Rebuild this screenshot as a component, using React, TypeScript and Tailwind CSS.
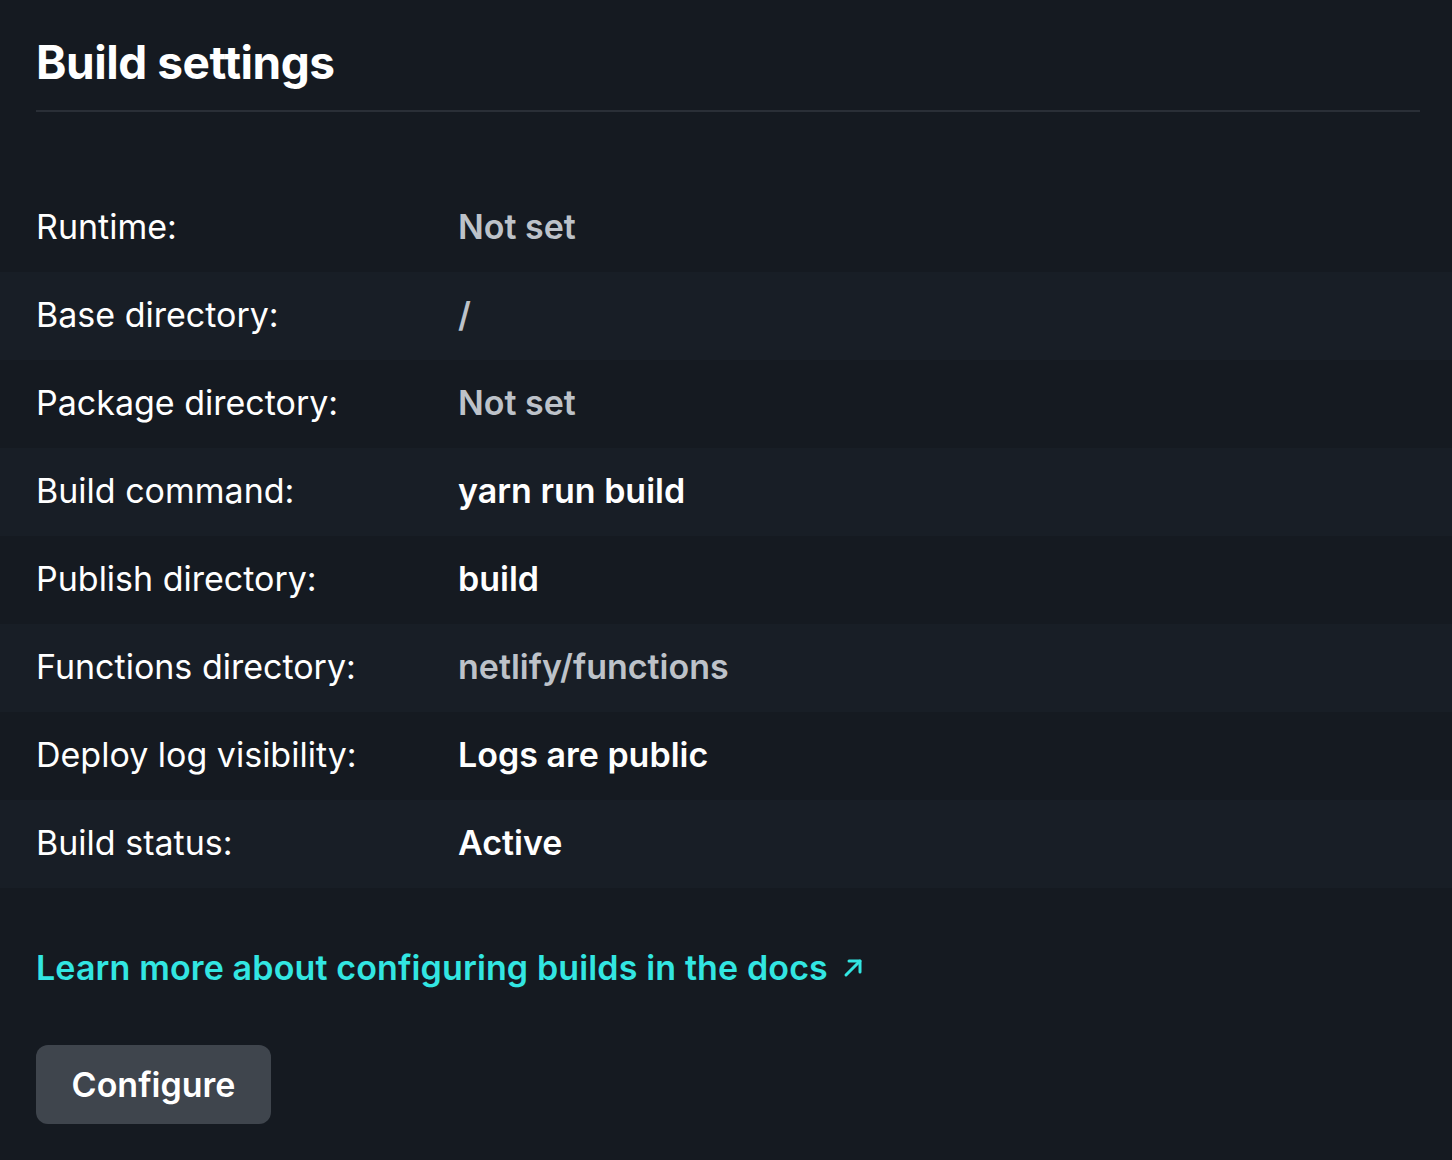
const rows: { label: string; value: string; muted?: boolean }[] = [
  { label: "Runtime:", value: "Not set", muted: true },
  { label: "Base directory:", value: "/", muted: true },
  { label: "Package directory:", value: "Not set", muted: true },
  { label: "Build command:", value: "yarn run build" },
  { label: "Publish directory:", value: "build" },
  { label: "Functions directory:", value: "netlify/functions", muted: true },
  { label: "Deploy log visibility:", value: "Logs are public" },
  { label: "Build status:", value: "Active" },
];

export default function App() {
  return (
    <div
      className="min-h-[1160px] bg-[#151a21] text-white"
      style={{ fontFamily: "Inter, 'Noto Sans', sans-serif" }}
    >
      <div className="px-[36px] pr-[32px]">
        <h1 className="pt-[32px] pb-[18px] text-[46px] font-bold leading-[60px] tracking-[-0.01em]">
          Build settings
        </h1>
        <div className="h-[2px] bg-[#2a2f37]" />
      </div>

      <dl className="mt-[72px]">
        {rows.map((row, i) => (
          <div
            key={row.label}
            className={`flex h-[88px] items-center px-[36px] pb-[3px] ${i % 2 === 1 ? "bg-[#181e26]" : ""}`}
          >
            <dt className="w-[422px] text-[34px] text-white">{row.label}</dt>
            <dd
              className={`text-[34px] font-semibold ${row.muted ? "text-[#bdc2c9]" : "text-white"}`}
            >
              {row.value}
            </dd>
          </div>
        ))}
      </dl>

      <div className="px-[36px] pt-[54px]">
        <a
          href="#"
          className="inline-flex items-center gap-[13px] text-[34px] font-semibold tracking-[0.004em] text-[#32e6e2]"
        >
          Learn more about configuring builds in the docs
          <svg
            width="24"
            height="24"
            viewBox="0 0 24 24"
            fill="none"
            stroke="currentColor"
            strokeWidth="3"
            strokeLinecap="round"
            strokeLinejoin="round"
          >
            <path d="M5 19L19 5" />
            <path d="M8 5h11v11" />
          </svg>
        </a>
        <div className="pt-[52px]">
          <button className="h-[79px] w-[235px] rounded-[12px] bg-[#3f454d] text-[34px] font-semibold text-white">
            Configure
          </button>
        </div>
      </div>
    </div>
  );
}
